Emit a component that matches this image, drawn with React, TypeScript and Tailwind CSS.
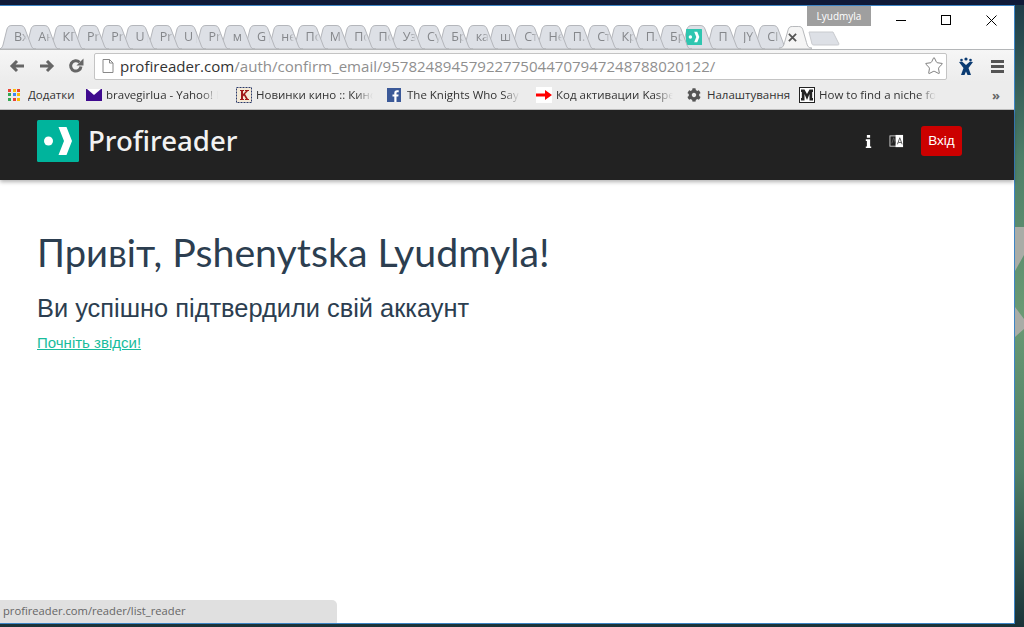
import { Star } from "lucide-react"
import { FaCog } from "react-icons/fa"

const tabs = ["Вх", "Ан", "КГ", "Pr", "Pr", "U|", "Pr", "U|", "Pr", "м", "G|", "нє", "По", "М", "По", "По", "Уз", "Су", "Бр", "ка", "ш", "Ст", "Не", "П.", "Ст", "Кр", "П.", "Бр", "", "П", "JY", "СІ"]

const bookmarks = [
  { label: "Додатки", width: "w-[78px]", text: "w-[48px]", icon: "apps" },
  { label: "bravegirlua - Yahoo! Mail", width: "w-[150px]", text: "w-[112px]", icon: "mail" },
  { label: "Новинки кино :: Кинопоиск", width: "w-[151px]", text: "w-[117px]", icon: "k" },
  { label: "The Knights Who Say Ni", width: "w-[149px]", text: "w-[113px]", icon: "f" },
  { label: "Код активации Kaspersky", width: "w-[151px]", text: "w-[117px]", icon: "arrow" },
  { label: "Налаштування", width: "w-[112px]", text: "w-[84px]", icon: "gear" },
  { label: "How to find a niche for", width: "w-[150px]", text: "w-[117px]", icon: "m" },
]

const LogoMark = ({ className, fill = "#00b49c" }: { className: string; fill?: string }) => (
  <svg viewBox="0 0 42 42" className={className}>
    <rect width="42" height="42" rx="1.500" fill={fill} />
    <circle cx="11.500" cy="21" r="4.500" fill="#fff" />
    <path d="M21.500 7H29.500L35 21 29.500 35H21.500L27 21z" fill="#fff" />
  </svg>
)

const BookmarkIcon = ({ icon }: { icon: string }) => {
  if (icon === "apps") {
    const colors = ["#ea4335", "#fbbc05", "#ea4335", "#34a853", "#4285f4", "#fbbc05", "#34a853", "#ea4335", "#fbbc05"]
    return (
      <div className="grid grid-cols-3 gap-px w-[13px] h-[13px]">
        {colors.map((c, i) => <svg key={i} viewBox="0 0 3 3" className="w-[3px] h-[3px]"><rect width="3" height="3" fill={c} /></svg>)}
      </div>
    )
  }
  if (icon === "mail") {
    return (
      <svg viewBox="0 0 16 12" className="w-[16px] h-[12px]">
        <rect width="16" height="12" fill="#3f0a8f" />
        <path d="M1 0h14L8 6z" fill="#fff" />
      </svg>
    )
  }
  if (icon === "k") {
    return (
      <svg viewBox="0 0 16 16" className="w-[16px] h-[16px]">
        <rect x="0.500" y="0.500" width="15" height="15" fill="#f4ead8" stroke="#2b3a6b" strokeDasharray="2 1" />
        <path d="M4 3h4v1H7v3l3-3H9V3h4v1h-1L9 7l3 5h1v1H9v-1h1L8 8.500 7 9.500V12h1v1H4v-1h1V4H4z" fill="#a01818" />
      </svg>
    )
  }
  if (icon === "f") {
    return (
      <svg viewBox="0 0 14 14" className="w-[14px] h-[14px]">
        <rect width="14" height="14" fill="#3b5998" />
        <path d="M9.500 14V8.500h1.800l.3-2.100H9.500V5.200c0-.6.200-1 1-1h1.200V2.300C11.400 2.300 10.800 2.200 10 2.200 8.400 2.200 7.300 3.200 7.300 5v1.400H5.500v2.100h1.800V14z" fill="#fff" />
      </svg>
    )
  }
  if (icon === "arrow") {
    return (
      <svg viewBox="0 0 16 16" className="w-[16px] h-[16px]">
        <rect width="16" height="16" fill="#fff" />
        <path d="M0 6.500h9V3l7 5-7 5V9.500H0z" fill="#f00" />
      </svg>
    )
  }
  if (icon === "gear") {
    return <FaCog size={14} className="text-[#555]" />
  }
  return (
    <svg viewBox="0 0 16 16" className="w-[16px] h-[16px]">
      <rect x="0.500" y="0.500" width="15" height="15" fill="#fff" stroke="#222" />
      <path d="M2 2.500h3.500L8 7l2.500-4.500H14V5h-.8v6H14v2.500h-3.500V7L8 13 5.500 7v6.500H2V11h.8V5H2z" fill="#222" />
    </svg>
  )
}

const Tab = ({ label, logo, z }: { label: string; logo?: boolean; z: number }) => (
  <div className="relative w-[24.3px] h-[24px] shrink-0 flex items-center" style={{ zIndex: z }}>
    <svg viewBox="0 0 38 24" className="absolute left-[-7px] top-0 w-[38px] h-[24px]">
      <path d="M0 24C3 24 4 23 5 20L9 4C10 1.500 11 .5 14 .5H22C25 .5 26 1.500 27 4L33 20C34 23 35 24 38 24Z" fill="#dde0e6" stroke="#b4b6bb" />
    </svg>
    {logo ? (
      <LogoMark className="relative ml-[1px] w-[16px] h-[16px]" fill="#2fc6b0" />
    ) : (
      <span className="relative ml-[9px] w-[13px] overflow-hidden whitespace-nowrap text-[12.500px] leading-none text-[#85878b] [mask-image:linear-gradient(to_right,black_60%,transparent)]">{label}</span>
    )}
  </div>
)

export default function App() {
  return (
    <div className="relative w-[1024px] h-[627px] overflow-hidden bg-[linear-gradient(to_bottom,#1d3a48_0%,#4d7f68_25%,#6a9a74_50%,#4f7f66_75%,#1a3238_100%)] font-['Open_Sans',sans-serif]">
      <div className="h-[5px] bg-[#101a38]" />
      {/* bits of the desktop wallpaper beside the window */}
      <svg viewBox="0 0 9 120" className="absolute left-[1015px] top-[227px] w-[9px] h-[120px]">
        <path d="M0 0h9v28L0 44zM0 80l9 12v10L0 110z" fill="#a9aca6" />
      </svg>
      <div className="w-[1015px] h-[619px] bg-white border-t border-r border-b border-[#3d85c6] flex flex-col">
        {/* title bar + tabs */}
        <div className="relative h-[44px] shrink-0 flex items-end pl-[5px] border-b border-[#b4b6b8]">
          <div className="absolute left-[807px] top-0 w-[64px] h-[20px] bg-[#9f9f9f] flex items-center justify-center text-[10px] text-white">Lyudmyla</div>
          <div className="absolute left-[896px] top-[14px] w-[10px] h-px bg-black" />
          <div className="absolute left-[941px] top-[9px] w-[10px] h-[10px] border border-black" />
          <svg viewBox="0 0 11 11" className="absolute left-[986px] top-[9px] w-[11px] h-[11px]">
            <path d="M.5.5l10 10M10.500.5l-10 10" stroke="#000" fill="none" />
          </svg>
          {tabs.map((t, i) => <Tab key={i} label={t} logo={i === 28} z={100 - i} />)}
          <div className="relative z-[200] w-[25.400px] h-[25px] mb-[-1px] shrink-0 flex items-center">
            <svg viewBox="0 0 36 25" className="absolute left-[-4px] top-0 w-[33px] h-[25px]">
              <path d="M0 24C4 24 5 22 6 18L10 4C11 1 12 .5 15 .5H21C24 .5 25 1 26 4L30 18C31 22 32 24 36 24V25H0Z" fill="#f5f5f5" stroke="#b0b2b6" />
            </svg>
            <svg viewBox="0 0 10 10" className="relative ml-[5px] w-[9px] h-[9px]">
              <path d="M1 1l8 8M9 1l-8 8" stroke="#555" strokeWidth="2" />
            </svg>
          </div>
          <svg viewBox="0 0 32 15" className="w-[32px] h-[15px] mb-[3px] shrink-0">
            <path d="M1 1H25L31 13C31 14 30 14 29 14H6C5 14 4.500 14 4 13Z" fill="#dde0e6" stroke="#c8cace" />
          </svg>
        </div>
        {/* toolbar */}
        <div className="h-[32px] shrink-0 flex items-center bg-[linear-gradient(to_bottom,#f6f6f6,#ececec)]">
          <svg viewBox="0 0 16 14" className="w-[16px] h-[14px] ml-[9px]">
            <path d="M15 7H3M8 2L3 7l5 5" fill="none" stroke="#666" strokeWidth="3" />
          </svg>
          <svg viewBox="0 0 16 14" className="w-[16px] h-[14px] ml-[14px]">
            <path d="M1 7h12M8 2l5 5-5 5" fill="none" stroke="#666" strokeWidth="3" />
          </svg>
          <svg viewBox="0 0 16 16" className="w-[16px] h-[16px] ml-[13px]">
            <path d="M13 8.500A5.200 5.200 0 1 1 11.500 4.200" fill="none" stroke="#666" strokeWidth="3" />
            <path d="M15.500 .5v7H8.500z" fill="#666" />
          </svg>
          <div className="ml-[10px] w-[853px] h-[27px] bg-white border border-[#c4c4c4] rounded-[2px] flex items-center">
            <svg viewBox="0 0 12 14" className="w-[12px] h-[14px] ml-[7px] shrink-0">
              <path d="M1 .5h6.500l3.500 3.500v9.500H1zM7.500.5V4H11" fill="#fff" stroke="#888" />
            </svg>
            <span className="ml-[6px] text-[15.070px] whitespace-nowrap text-[#8f8f8f]">
              <span className="text-[#333]">profireader.com</span>/auth/confirm_email/95782489457922775044707947248788020122/
            </span>
            <Star size={20} strokeWidth={1} className="ml-auto mr-[2px] text-[#666] shrink-0" />
          </div>
          <svg viewBox="0 0 18 20" className="w-[18px] h-[20px] ml-[10px]">
            <g fill="#0b3b72">
              <circle cx="9" cy="3" r="1.600" /><circle cx="4.500" cy="4" r="1.300" /><circle cx="13.500" cy="4" r="1.300" />
              <path d="M2 6l3-.5L9 9l4-3.500 3 .5-4.500 6L14 19h-3.500L9 15.500 7.500 19H4l2.500-7z" />
            </g>
          </svg>
          <div className="ml-[16px] flex flex-col gap-[2px] w-[13px]">
            <div className="h-[3px] bg-[#555]" /><div className="h-[3px] bg-[#555]" /><div className="h-[3px] bg-[#555]" />
          </div>
        </div>
        {/* bookmarks */}
        <div className="relative h-[28px] shrink-0 flex items-center pl-[8px] pb-[1px] bg-[#ececec] border-b border-[#bcbcbc] text-[11.500px] text-[#333]">
          {bookmarks.map((b) => (
            <div key={b.label} className={`${b.width} shrink-0 flex items-center`}>
              <div className="w-[20px] shrink-0 flex items-center">
                <BookmarkIcon icon={b.icon} />
              </div>
              <span className={`${b.text} overflow-hidden whitespace-nowrap ${b.icon === "apps" || b.icon === "gear" ? "" : "[mask-image:linear-gradient(to_right,black_85%,transparent)]"}`}>{b.label}</span>
            </div>
          ))}
          <span className="absolute left-[992px] top-[4px] text-[13px] font-bold text-[#666]">»</span>
        </div>
        {/* site navbar */}
        <div className="h-[70px] shrink-0 bg-[#222222] shadow-[0_2px_4px_rgba(0,0,0,0.3)] flex items-center pl-[37px] pr-[52px] pb-[8px]">
          <LogoMark className="w-[42px] h-[42px]" />
          <span className="ml-[9px] text-[27.600px] leading-none font-medium text-[#f2f2f2] font-['Noto_Sans',sans-serif]">Profireader</span>
          <svg viewBox="0 0 6 12" className="ml-auto w-[7px] h-[13px]">
            <path d="M1.500 0h3v2.500h-3zM.5 4h4v6.500h1V12h-5v-1.500h1V5.500h-1z" fill="#fff" />
          </svg>
          <svg viewBox="0 0 16 16" className="ml-[17px] w-[15px] h-[15px]">
            <rect x="1" y="2" width="8" height="11" fill="#222" stroke="#ccc" />
            <rect x="7" y="1" width="8" height="13" fill="#fff" />
            <path d="M3 10l2-6 2 6M9 11l2.500-7 2.500 7M10 9h3" fill="none" stroke="#555" />
          </svg>
          <button className="ml-[17px] w-[41px] h-[30px] rounded-[3px] bg-[#cc0000] text-white text-[13.500px] font-['Liberation_Sans',sans-serif]">Вхід</button>
        </div>
        {/* page */}
        <div className="relative flex-1 pl-[37px] pt-[48px] text-[#2c3e50] font-['Liberation_Sans',sans-serif]">
          <h1 className="text-[39.300px] leading-[48px] font-['Lato',sans-serif]"><span className="text-[38.100px]">Привіт,</span> Pshenytska Lyudmyla!</h1>
          <h2 className="mt-[17px] text-[25.400px] leading-[30px]">Ви успішно підтвердили свій аккаунт</h2>
          <a href="#" className="block mt-[11px] text-[15px] leading-[18px] text-[#18bc9c] underline">Почніть звідси!</a>
          <div className="absolute left-0 bottom-0 w-[337px] h-[23px] bg-[#e0e0e0] rounded-tr-[5px] pl-[3px] flex items-center text-[11.200px] text-[#666] font-['Open_Sans',sans-serif]">
            profireader.com/reader/list_reader
          </div>
        </div>
      </div>
    </div>
  )
}
